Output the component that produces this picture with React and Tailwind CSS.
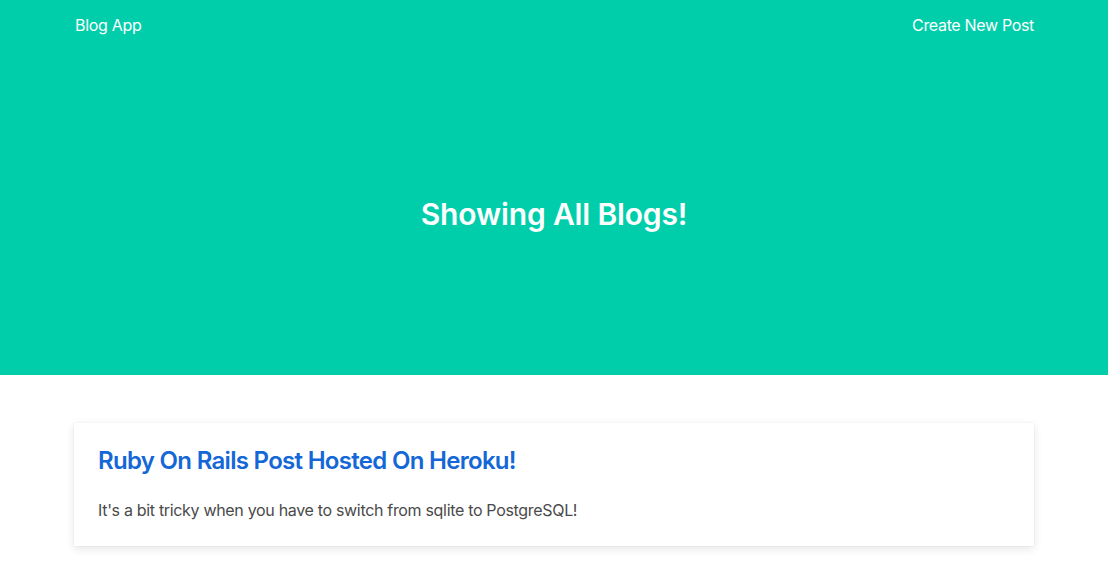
export default function App() {
  const posts = [
    {
      title: 'Ruby On Rails Post Hosted On Heroku!',
      body: "It's a bit tricky when you have to switch from sqlite to PostgreSQL!",
    },
  ];

  return (
    <div className="min-h-screen bg-white font-['Inter','Liberation_Sans',sans-serif]">
      {/* Hero */}
      <section className="flex h-[375px] flex-col bg-[#00ceab] text-white">
        <nav className="mx-auto flex h-[50px] w-[960px] items-center justify-between">
          <a className="pl-px text-base tracking-[-0.3px]">Blog App</a>
          <a className="text-base tracking-[-0.33px]">Create New Post</a>
        </nav>
        <div className="flex flex-1 items-center justify-center pt-[4px]">
          <h1 className="text-[30px] font-semibold leading-tight tracking-[-0.15px]">Showing All Blogs!</h1>
        </div>
      </section>

      {/* Posts */}
      <section className="mx-auto w-[960px] pt-12">
        {posts.map((post, i) => (
          <div
            key={i}
            className="rounded-[2px] bg-white p-6 shadow-[0_3px_10px_rgba(10,10,10,0.1),0_0_0_1px_rgba(10,10,10,0.02)]"
          >
            <h2 className="text-2xl font-semibold leading-[27px] tracking-[-0.7px] text-[#1467d6]">{post.title}</h2>
            <p className="mt-6 text-base leading-6 tracking-[-0.32px] text-[#4a4a4a]">{post.body}</p>
          </div>
        ))}
      </section>
    </div>
  );
}
